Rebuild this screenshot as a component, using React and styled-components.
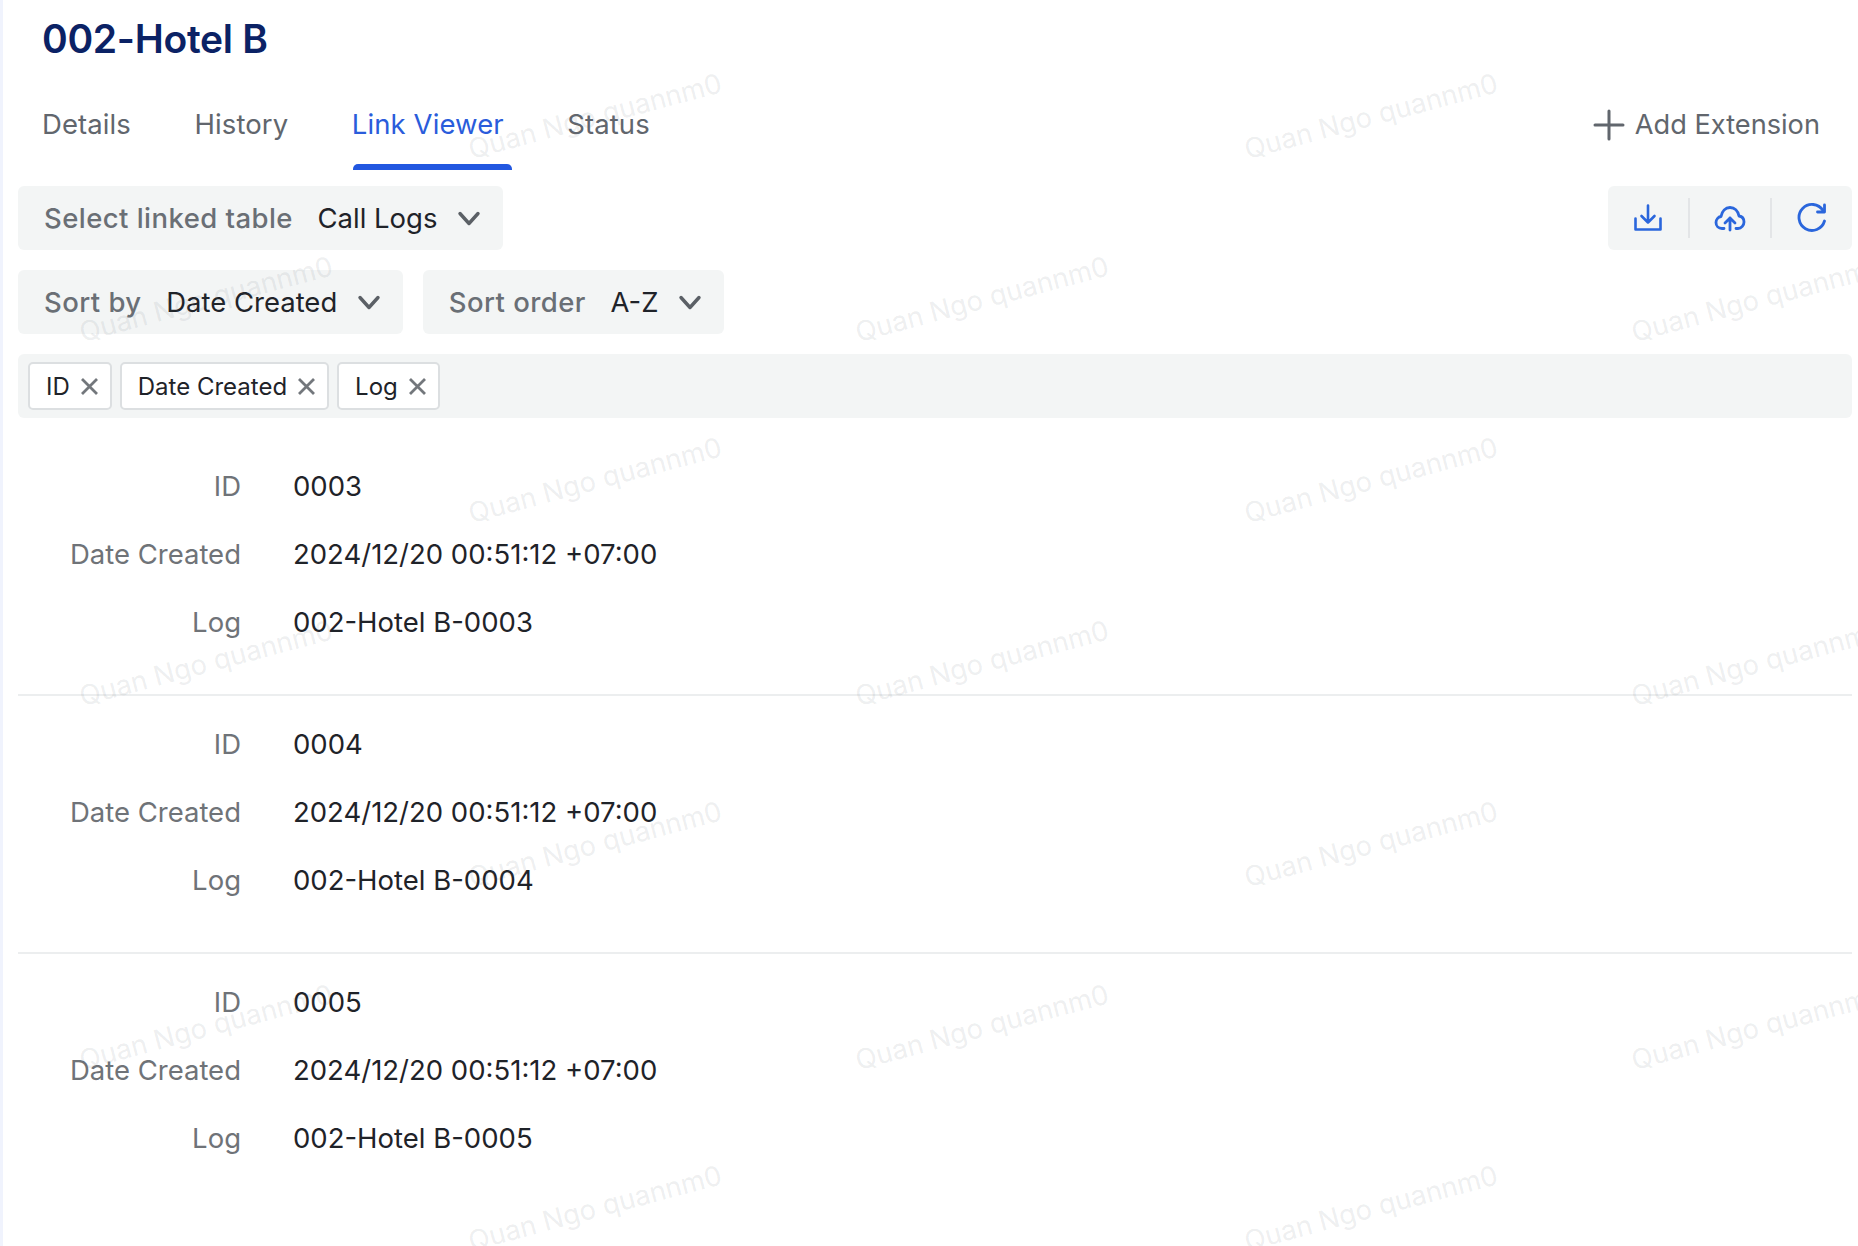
import React from "react";
import styled, { createGlobalStyle } from "styled-components";

const GlobalStyle = createGlobalStyle`
  html, body {
    margin: 0;
    padding: 0;
    background: #ffffff;
  }
  body {
    font-family: Inter, "Liberation Sans", sans-serif;
    overflow: hidden;
  }
`;

const Page = styled.div`
  position: relative;
  box-sizing: border-box;
  width: 1858px;
  height: 1246px;
  padding: 0 6px 0 15px;
  border-left: 3px solid #f0f3fd;
  overflow: hidden;
`;

const Title = styled.h1`
  margin: 0;
  padding: 15px 0 0 24px;
  height: 53px;
  font-size: 39px;
  line-height: 48px;
  font-weight: 600;
  letter-spacing: -0.3px;
  color: #0b2265;
`;

const TabBar = styled.div`
  display: flex;
  align-items: flex-start;
  justify-content: space-between;
  height: 102px;
  padding: 0 32px 0 24px;
  box-sizing: border-box;
`;

const Tabs = styled.div`
  display: flex;
  gap: 63.5px;
`;

const Tab = styled.div`
  position: relative;
  padding-top: 39px;
  font-size: 27.5px;
  letter-spacing: 0.1px;
  line-height: 34px;
  color: ${(props) => (props.$active ? "#2a5cdb" : "#61666d")};

  ${(props) =>
    props.$active &&
    `
    &::after {
      content: "";
      position: absolute;
      left: 1px;
      right: -8px;
      top: 96px;
      height: 6px;
      border-radius: 5px 5px 0 0;
      background: #2257e0;
    }
  `}
`;

const AddButton = styled.div`
  display: flex;
  align-items: center;
  gap: 10px;
  padding-top: 40px;
  font-size: 27.2px;
  line-height: 34px;
  color: #61666d;
`;

const ControlRow = styled.div`
  display: flex;
  align-items: flex-start;
  justify-content: space-between;
  margin-top: ${(props) => (props.$first ? "16px" : "20px")};
`;

const ControlGroup = styled.div`
  display: flex;
  gap: 20px;
`;

const Select = styled.div`
  display: flex;
  align-items: center;
  box-sizing: border-box;
  height: 64px;
  padding: 0 22px 0 26px;
  border-radius: 6px;
  background: #f3f5f5;
  font-size: 27.5px;
`;

const SelectLabel = styled.span`
  font-weight: 500;
  letter-spacing: 0.45px;
  color: #6a6f75;
  margin-right: 24.5px;
`;

const SelectValue = styled.span`
  color: #1f2329;
  margin-right: 19.5px;
`;

const ActionGroup = styled.div`
  display: flex;
  align-items: center;
  box-sizing: border-box;
  width: 244px;
  height: 64px;
  border-radius: 6px;
  background: #f3f5f5;
`;

const ActionButton = styled.div`
  flex: 1;
  display: flex;
  align-items: center;
  justify-content: center;
  height: 40px;
  & + & {
    border-left: 2px solid #e3e5e7;
  }
`;

const TagBar = styled.div`
  display: flex;
  align-items: center;
  gap: 8px;
  box-sizing: border-box;
  height: 64px;
  margin-top: 20px;
  padding: 0 10px;
  border-radius: 6px;
  background: #f3f5f5;
`;

const Tag = styled.div`
  display: flex;
  align-items: center;
  gap: 10px;
  box-sizing: border-box;
  height: 48px;
  padding: 0 11px 0 16px;
  border: 2px solid #dcdfe1;
  border-radius: 5px;
  background: #ffffff;
  font-size: 24px;
  color: #1f2329;
`;

const RecordList = styled.div`
  margin-top: 20px;
`;

const Record = styled.div`
  display: grid;
  grid-template-columns: 223px 1fr;
  column-gap: 52px;
  row-gap: 34px;
  align-content: start;
  box-sizing: border-box;
  height: 258px;
  padding-top: 31px;
  border-bottom: ${(props) => (props.$last ? "none" : "2px solid #eceeef")};
  font-size: 27.5px;
  line-height: 34px;
`;

const FieldLabel = styled.div`
  text-align: right;
  color: #6f7378;
`;

const FieldValue = styled.div`
  color: #1f2329;
`;

const Watermark = styled.div`
  position: absolute;
  white-space: nowrap;
  pointer-events: none;
  font-size: 27.5px;
  line-height: 32px;
  color: rgba(90, 100, 110, 0.11);
  transform: rotate(-15deg);
  transform-origin: left bottom;
`;

const Chevron = () => (
  <svg width="24" height="24" viewBox="0 0 24 24" fill="none" stroke="#5b6066" strokeWidth="3.4" strokeLinecap="round" strokeLinejoin="round">
    <path d="M3 7.5l9 10 9-10" />
  </svg>
);

const CloseIcon = () => (
  <svg width="19" height="19" viewBox="0 0 19 19" fill="none" stroke="#73777c" strokeWidth="2.8">
    <path d="M2 2l15 15M17 2L2 17" />
  </svg>
);

const PlusIcon = () => (
  <svg width="32" height="32" viewBox="0 0 32 32" fill="none" stroke="#61666d" strokeWidth="3" strokeLinecap="round">
    <path d="M16 2v28M2 16h28" />
  </svg>
);

const DownloadIcon = () => (
  <svg width="30" height="30" viewBox="0 0 30 30" fill="none" stroke="#2a66dc" strokeWidth="2.6" strokeLinecap="round" strokeLinejoin="round">
    <path d="M2.5 15.5v11h25v-11" />
    <path d="M15 2.5v17M8.5 13l6.500 6.500 6.500-6.500" />
  </svg>
);

const UploadIcon = () => (
  <svg width="32" height="30" viewBox="0 0 32 30" fill="none" stroke="#2a66dc" strokeWidth="2.8" strokeLinecap="round" strokeLinejoin="round">
    <path d="M10 25.500H8c-3.500 0-6-2.500-6-6 0-3 2.200-5.500 5-6 1-5.500 4.500-9 9-9 4.500 0 8 3.500 9 8.500 3 .5 5 3 5 6s-2.500 6.500-6 6.500h-2" />
    <path d="M16 27V15M11 20l5-5 5 5" />
  </svg>
);

const ReloadIcon = () => (
  <svg width="30" height="30" viewBox="0 0 30 30" fill="none" stroke="#2a66dc" strokeWidth="2.8" strokeLinecap="round" strokeLinejoin="round">
    <path d="M26 7.500A13 13 0 1 0 27.500 18" />
    <path d="M27.500 2v7h-7" />
  </svg>
);

const records = ["0003", "0004", "0005"];

const watermarkSpots = [];
[0, 1, 2, 3].forEach((row) => {
  [470, 1246].forEach((x) => watermarkSpots.push({ x, y: 133 + row * 364 }));
});
[0, 1, 2].forEach((row) => {
  [81, 857, 1633].forEach((x) => watermarkSpots.push({ x, y: 316 + row * 364 }));
});

function App() {
  return (
    <Page>
      <GlobalStyle />
      <Title>002-Hotel B</Title>
      <TabBar>
        <Tabs>
          <Tab>Details</Tab>
          <Tab>History</Tab>
          <Tab $active>Link Viewer</Tab>
          <Tab>Status</Tab>
        </Tabs>
        <AddButton>
          <PlusIcon />
          Add Extension
        </AddButton>
      </TabBar>

      <ControlRow $first>
        <Select>
          <SelectLabel>Select linked table</SelectLabel>
          <SelectValue>Call Logs</SelectValue>
          <Chevron />
        </Select>
        <ActionGroup>
          <ActionButton><DownloadIcon /></ActionButton>
          <ActionButton><UploadIcon /></ActionButton>
          <ActionButton><ReloadIcon /></ActionButton>
        </ActionGroup>
      </ControlRow>

      <ControlRow>
        <ControlGroup>
          <Select>
            <SelectLabel>Sort by</SelectLabel>
            <SelectValue>Date Created</SelectValue>
            <Chevron />
          </Select>
          <Select>
            <SelectLabel>Sort order</SelectLabel>
            <SelectValue>A-Z</SelectValue>
            <Chevron />
          </Select>
        </ControlGroup>
      </ControlRow>

      <TagBar>
        <Tag>ID <CloseIcon /></Tag>
        <Tag>Date Created <CloseIcon /></Tag>
        <Tag>Log <CloseIcon /></Tag>
      </TagBar>

      <RecordList>
        {records.map((id, i) => (
          <Record key={id} $last={i === records.length - 1}>
            <FieldLabel>ID</FieldLabel>
            <FieldValue>{id}</FieldValue>
            <FieldLabel>Date Created</FieldLabel>
            <FieldValue>2024/12/20 00:51:12 +07:00</FieldValue>
            <FieldLabel>Log</FieldLabel>
            <FieldValue>002-Hotel B-{id}</FieldValue>
          </Record>
        ))}
      </RecordList>

      {watermarkSpots.map((spot) => (
        <Watermark key={`${spot.x}-${spot.y}`} style={{ left: spot.x, top: spot.y }}>
          Quan Ngo quannm0
        </Watermark>
      ))}
    </Page>
  );
}

export default App;
